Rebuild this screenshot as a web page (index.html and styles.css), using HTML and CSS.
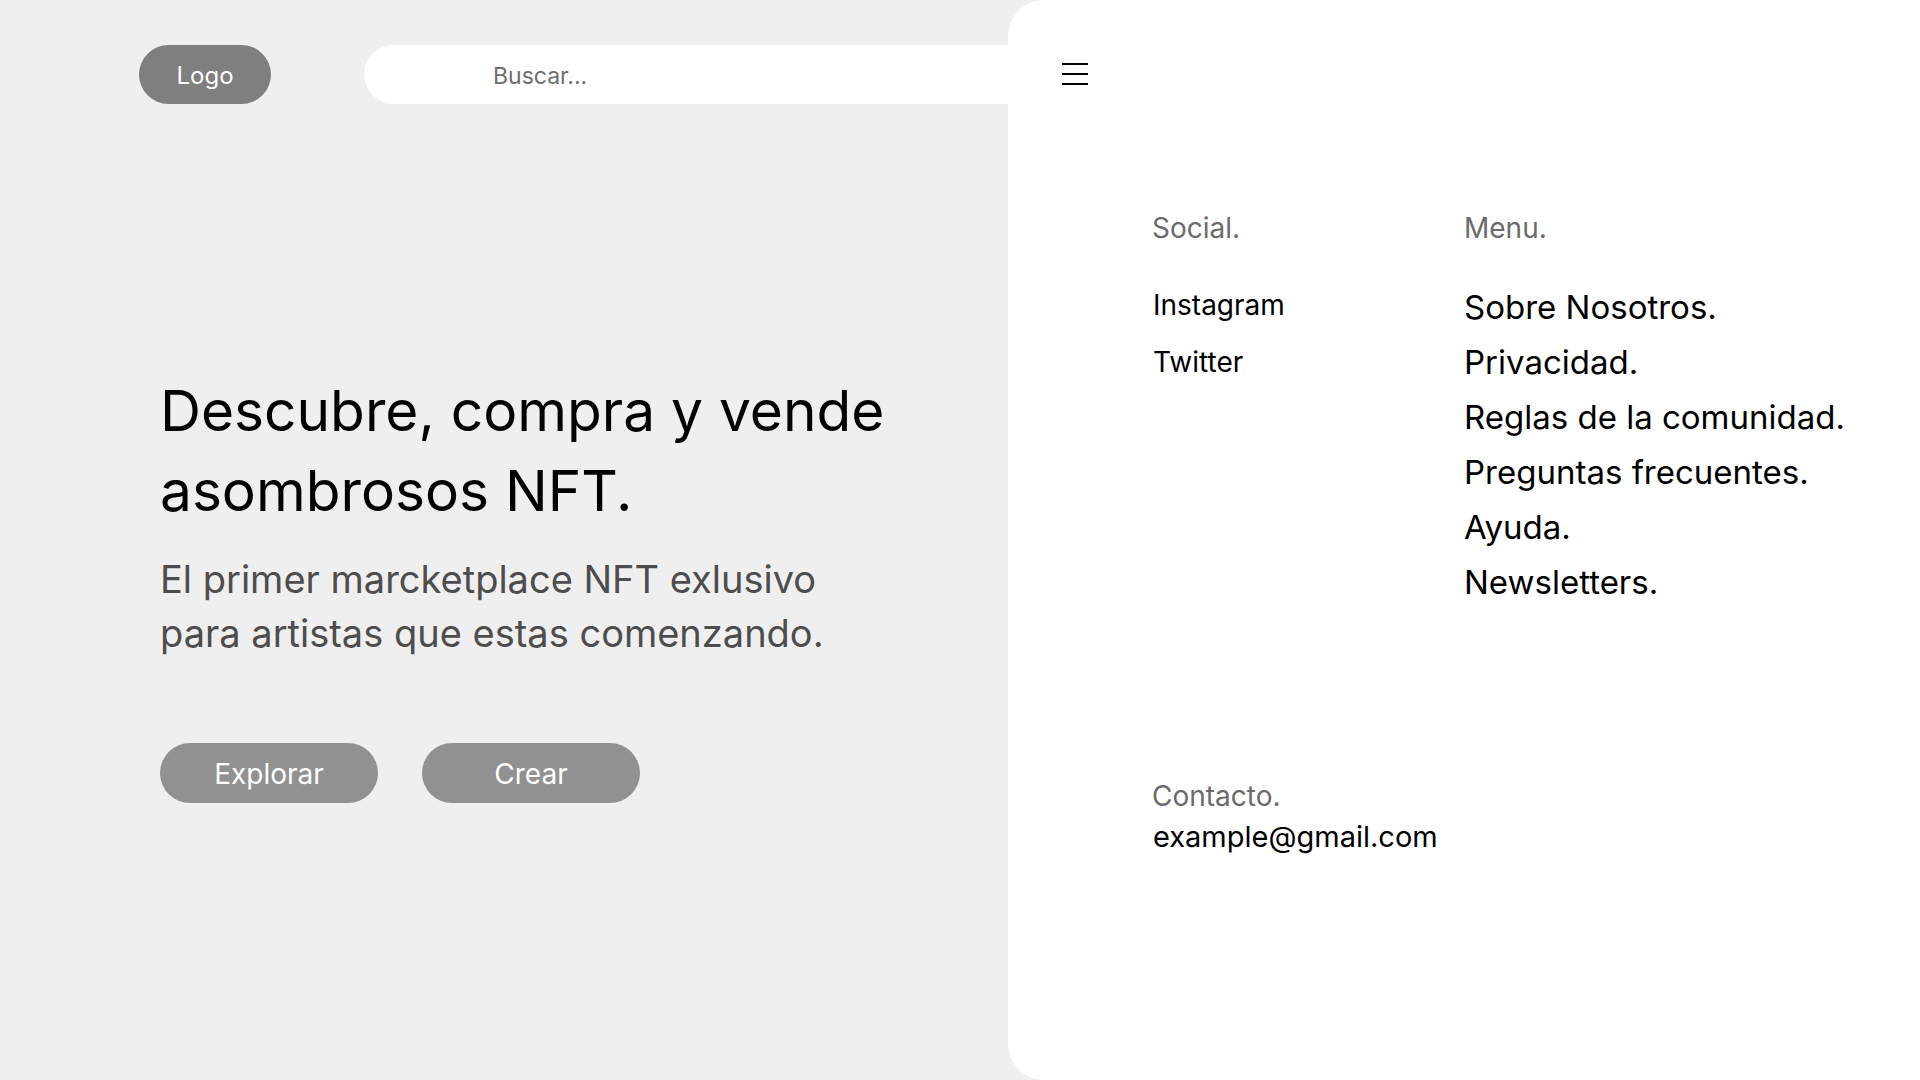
FILE: index.html
```html
<!DOCTYPE html>
<html lang="es">
<head>
<meta charset="utf-8">
<title>NFT Marketplace</title>
<link rel="stylesheet" href="styles.css">
</head>
<body>
<div class="page">
  <main class="main">
    <header class="topbar">
      <div class="logo">Logo</div>
      <div class="search">Buscar...</div>
    </header>
    <section class="hero">
      <h1 class="hero-title">Descubre, compra y vende<br>asombrosos NFT.</h1>
      <p class="hero-sub">El primer marcketplace NFT exlusivo<br>para artistas que estas comenzando.</p>
      <div class="actions">
        <button class="btn">Explorar</button>
        <button class="btn">Crear</button>
      </div>
    </section>
  </main>
  <aside class="panel">
    <div class="burger">
      <svg width="26" height="22" viewBox="0 0 26 22"><path d="M0 1H26M0 11H26M0 21H26" stroke="#000" stroke-width="2"/></svg>
    </div>
    <div class="cols">
      <div class="col social">
        <div class="label">Social.</div>
        <ul class="social-list">
          <li>Instagram</li>
          <li>Twitter</li>
        </ul>
      </div>
      <div class="col menu">
        <div class="label">Menu.</div>
        <ul class="menu-list">
          <li>Sobre Nosotros.</li>
          <li>Privacidad.</li>
          <li>Reglas de la comunidad.</li>
          <li>Preguntas frecuentes.</li>
          <li>Ayuda.</li>
          <li>Newsletters.</li>
        </ul>
      </div>
      <div class="contact">
        <div class="label">Contacto.</div>
        <div class="email">example@gmail.com</div>
      </div>
    </div>
  </aside>
</div>
</body>
</html>
```

FILE: styles.css
```css
* { box-sizing: border-box; }
html, body { margin: 0; padding: 0; }
body {
  font-family: Inter, "Noto Sans", sans-serif;
  background: #efefef;
  color: #000;
}
.page {
  width: 1920px;
  height: 1080px;
  display: grid;
  grid-template-columns: 1008px 1fr;
  overflow: hidden;
}
.main {
  padding: 45px 0 0 139px;
}
.topbar {
  display: flex;
  align-items: center;
  height: 59px;
}
.logo {
  width: 132px;
  height: 59px;
  border-radius: 30px;
  background: #7f7f7f;
  color: #fff;
  font-size: 24px;
  padding-top: 2px;
  display: flex;
  align-items: center;
  justify-content: center;
}
.search {
  margin-left: 93px;
  flex: 1;
  height: 59px;
  background: #fff;
  border-radius: 30px 0 0 30px;
  padding-left: 129px;
  padding-top: 2px;
  display: flex;
  align-items: center;
  font-size: 23px;
  color: #6e6e6e;
}
.hero {
  padding-left: 21px;
}
.hero-title {
  margin: 267px 0 0;
  font-size: 56.8px;
  line-height: 80px;
  font-weight: 400;
  color: #000;
}
.hero-sub {
  margin: 21px 0 0;
  font-size: 38px;
  line-height: 54px;
  color: #4d4d4d;
}
.actions {
  margin-top: 83px;
  display: flex;
  gap: 44px;
}
.btn {
  width: 218px;
  height: 60px;
  border: none;
  border-radius: 30px;
  background: #919191;
  color: #fff;
  font-family: inherit;
  font-size: 28px;
  padding: 2px 0 0;
}
.panel {
  background: #fff;
  border-radius: 36px 0 0 36px;
  padding-top: 63px;
}
.burger {
  margin-left: 54px;
  height: 22px;
  line-height: 0;
}
.cols {
  margin-top: 127px;
  padding-left: 144px;
  display: grid;
  grid-template-columns: 312px auto;
}
.label {
  font-size: 28px;
  line-height: 32px;
  color: #6b6b6b;
}
ul {
  list-style: none;
  margin: 0;
  padding: 0;
}
.social-list {
  margin-top: 33px;
  padding-left: 1px;
  font-size: 28px;
  line-height: 57px;
}
.menu-list {
  margin-top: 36px;
  font-size: 33px;
  line-height: 55px;
}
.contact {
  grid-column: 1 / 3;
  margin-top: 170px;
}
.email {
  margin-top: 7px;
  padding-left: 1px;
  font-size: 29px;
  line-height: 36px;
}
```
